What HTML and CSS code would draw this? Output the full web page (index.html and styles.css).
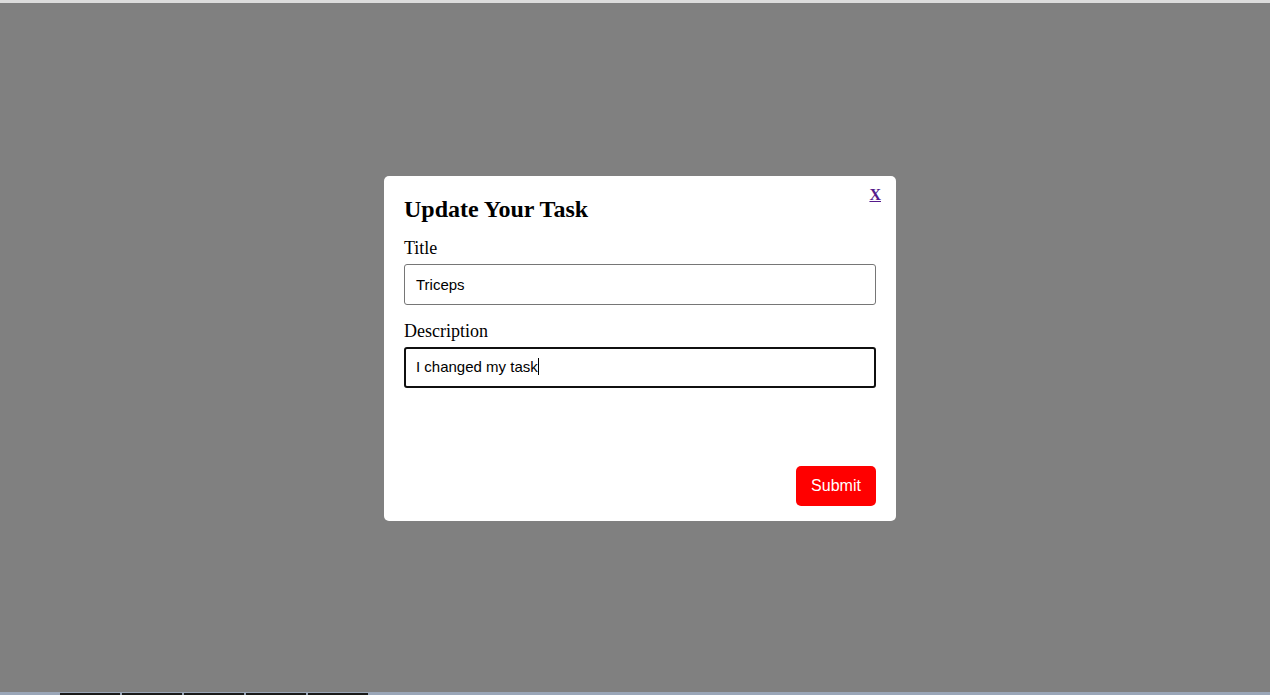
FILE: index.html
```html
<!DOCTYPE html>
<html>
<head>
<meta charset="utf-8">
<link rel="stylesheet" href="styles.css">
</head>
<body>
<div class="topbar"></div>
<div class="overlay">
  <div class="modal">
    <a href="#" class="close">X</a>
    <h2 class="modal-title">Update Your Task</h2>
    <label class="field-label">Title</label>
    <div class="field">Triceps</div>
    <label class="field-label">Description</label>
    <div class="field field-focus">I changed my task<span class="caret"></span></div>
    <div class="actions">
      <button class="submit">Submit</button>
    </div>
  </div>
</div>
<div class="bottombar">
  <span class="seg"></span><span class="seg"></span><span class="seg"></span><span class="seg"></span><span class="seg"></span>
</div>
</body>
</html>
```

FILE: styles.css
```css
html, body {
  margin: 0;
  padding: 0;
  height: 100%;
  overflow: hidden;
}
body {
  background: #808080;
  font-family: "Liberation Serif", "Times New Roman", serif;
  display: flex;
  flex-direction: column;
}
.topbar {
  height: 3px;
  background: #dcdcdc;
  flex: none;
}
.overlay {
  flex: 1;
  background: #808080;
  display: flex;
  align-items: center;
  justify-content: center;
  padding-left: 10px;
}
.modal {
  position: relative;
  width: 512px;
  height: 345px;
  box-sizing: border-box;
  background: #fff;
  border-radius: 5px;
  padding: 19px 20px 15px 20px;
  display: flex;
  flex-direction: column;
  margin-top: 1px;
}
.close {
  position: absolute;
  top: 10px;
  right: 15px;
  color: #551a8b;
  font-weight: bold;
  font-size: 16px;
  text-decoration: underline;
}
.modal-title {
  margin: 0 0 15px 0;
  font-size: 24px;
  font-weight: bold;
  line-height: 28px;
  color: #000;
}
.field-label {
  font-size: 18px;
  line-height: 20px;
  color: #000;
  margin-bottom: 6px;
}
.field {
  height: 41px;
  box-sizing: border-box;
  border: 1px solid #767676;
  border-radius: 3px;
  padding: 0 11px;
  display: flex;
  align-items: center;
  font-family: "Liberation Sans", Arial, sans-serif;
  font-size: 15px;
  color: #000;
  margin-bottom: 16px;
}
.field-focus {
  border: 2px solid #101010;
  padding: 0 10px 2px 10px;
}
.caret {
  display: inline-block;
  width: 1px;
  height: 17px;
  background: #000;
}
.actions {
  margin-top: auto;
  display: flex;
  justify-content: flex-end;
}
.submit {
  width: 80px;
  height: 40px;
  border: none;
  border-radius: 5px;
  background: #ff0000;
  color: #fff;
  font-family: "Liberation Sans", Arial, sans-serif;
  font-size: 16px;
}
.bottombar {
  flex: none;
  height: 3px;
  background: #9aa6b8;
  display: flex;
  align-items: flex-end;
  padding-left: 60px;
  gap: 2px;
}
.seg {
  width: 60px;
  height: 2px;
  background: #1a1a1a;
}
```
